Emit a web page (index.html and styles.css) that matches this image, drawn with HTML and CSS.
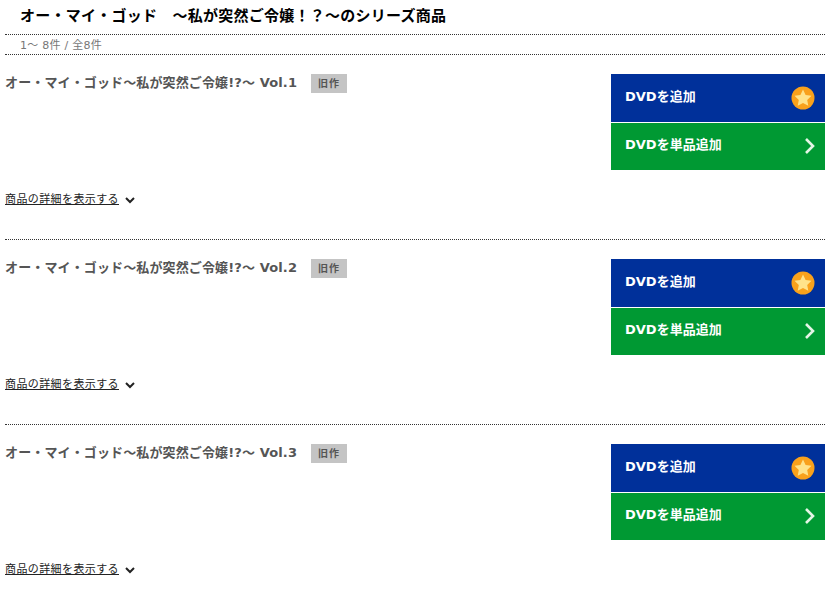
FILE: index.html
```html
<!DOCTYPE html>
<html lang="ja">
<head>
  <meta charset="UTF-8" />
  <title>オー・マイ・ゴッド ～私が突然ご令嬢！？～のシリーズ商品</title>
  <meta name="viewport" content="width=device-width, initial-scale=1.0" />
  <link rel="stylesheet" href="styles.css">
</head>
<body>
  <div class="container">
    <h1 class="series__title">オー・マイ・ゴッド　～私が突然ご令嬢！？～のシリーズ商品</h1>
    <div class="series__count">1～ 8件 / 全8件</div>

    <div class="item">
      <div class="item__main">
        <div class="item__head">
          <span class="item__title">オー・マイ・ゴッド～私が突然ご令嬢!?～ Vol.1</span>
          <span class="item__tag">旧作</span>
        </div>
        <a class="item__more" href="#"><span class="item__link">商品の詳細を表示する</span>
          <svg class="item__arrow" viewBox="0 0 10 7" width="10" height="7"><path d="M1 1l4 4 4-4" fill="none" stroke="#222" stroke-width="2"/></svg>
        </a>
      </div>
      <div class="item__btns">
        <a class="btn btn--blue" href="#"><span class="btn__label">DVDを追加</span>
          <svg class="btn__star" viewBox="0 0 24 24" width="24" height="24"><circle cx="12" cy="12" r="11.5" fill="#f9a11b"/><path d="M12 3.6l2.6 5.4 5.9.8-4.3 4.1 1.1 5.8-5.3-2.8-5.3 2.8 1.1-5.8-4.3-4.1 5.9-.8z" fill="#ffe38a"/></svg>
        </a>
        <a class="btn btn--green" href="#"><span class="btn__label">DVDを単品追加</span>
          <svg class="btn__chev" viewBox="0 0 12 18" width="12" height="18"><path d="M3 2l7 7-7 7" fill="none" stroke="#e4f5e6" stroke-width="2.6"/></svg>
        </a>
      </div>
    </div>

    <div class="item">
      <div class="item__main">
        <div class="item__head">
          <span class="item__title">オー・マイ・ゴッド～私が突然ご令嬢!?～ Vol.2</span>
          <span class="item__tag">旧作</span>
        </div>
        <a class="item__more" href="#"><span class="item__link">商品の詳細を表示する</span>
          <svg class="item__arrow" viewBox="0 0 10 7" width="10" height="7"><path d="M1 1l4 4 4-4" fill="none" stroke="#222" stroke-width="2"/></svg>
        </a>
      </div>
      <div class="item__btns">
        <a class="btn btn--blue" href="#"><span class="btn__label">DVDを追加</span>
          <svg class="btn__star" viewBox="0 0 24 24" width="24" height="24"><circle cx="12" cy="12" r="11.5" fill="#f9a11b"/><path d="M12 3.6l2.6 5.4 5.9.8-4.3 4.1 1.1 5.8-5.3-2.8-5.3 2.8 1.1-5.8-4.3-4.1 5.9-.8z" fill="#ffe38a"/></svg>
        </a>
        <a class="btn btn--green" href="#"><span class="btn__label">DVDを単品追加</span>
          <svg class="btn__chev" viewBox="0 0 12 18" width="12" height="18"><path d="M3 2l7 7-7 7" fill="none" stroke="#e4f5e6" stroke-width="2.6"/></svg>
        </a>
      </div>
    </div>

    <div class="item">
      <div class="item__main">
        <div class="item__head">
          <span class="item__title">オー・マイ・ゴッド～私が突然ご令嬢!?～ Vol.3</span>
          <span class="item__tag">旧作</span>
        </div>
        <a class="item__more" href="#"><span class="item__link">商品の詳細を表示する</span>
          <svg class="item__arrow" viewBox="0 0 10 7" width="10" height="7"><path d="M1 1l4 4 4-4" fill="none" stroke="#222" stroke-width="2"/></svg>
        </a>
      </div>
      <div class="item__btns">
        <a class="btn btn--blue" href="#"><span class="btn__label">DVDを追加</span>
          <svg class="btn__star" viewBox="0 0 24 24" width="24" height="24"><circle cx="12" cy="12" r="11.5" fill="#f9a11b"/><path d="M12 3.6l2.6 5.4 5.9.8-4.3 4.1 1.1 5.8-5.3-2.8-5.3 2.8 1.1-5.8-4.3-4.1 5.9-.8z" fill="#ffe38a"/></svg>
        </a>
        <a class="btn btn--green" href="#"><span class="btn__label">DVDを単品追加</span>
          <svg class="btn__chev" viewBox="0 0 12 18" width="12" height="18"><path d="M3 2l7 7-7 7" fill="none" stroke="#e4f5e6" stroke-width="2.6"/></svg>
        </a>
      </div>
    </div>
  </div>
</body>
</html>
```

FILE: styles.css
```css
html, body {
  height: 605px;
  overflow: hidden;
}
body {
  font-family: "DejaVu Sans", "Noto Sans CJK JP", sans-serif;
  background: #fff;
  color: #000;
  margin: 0;
  padding: 0;
}
.container {
  width: 820px;
  margin-left: 5px;
}
.series__title {
  margin: 0;
  height: 27px;
  padding: 7px 0 0 15px;
  font-size: 15px;
  line-height: 18px;
  font-weight: bold;
  letter-spacing: 0.25px;
  border-bottom: 1px dotted #333;
}
.series__count {
  height: 19px;
  padding-left: 15px;
  font-size: 11px;
  line-height: 21px;
  letter-spacing: 0.25px;
  color: #777;
  border-bottom: 1px dotted #333;
}
.item {
  display: flex;
  justify-content: space-between;
  height: 165px;
  padding-top: 19px;
  border-bottom: 1px dotted #333;
}
.item:last-child {
  border-bottom: 0;
}
.item__main {
  display: flex;
  flex-direction: column;
  justify-content: space-between;
  height: 134px;
}
.item__head {
  display: flex;
  align-items: flex-start;
  gap: 14px;
}
.item__title {
  font-size: 13px;
  line-height: 17px;
  font-weight: bold;
  letter-spacing: 0.13px;
  color: #555;
}
.item__tag {
  width: 36px;
  height: 19px;
  background: #c4c4c4;
  color: #555;
  font-size: 10px;
  font-weight: bold;
  line-height: 19px;
  letter-spacing: 1px;
  text-align: center;
}
.item__more {
  display: flex;
  align-items: center;
  gap: 6px;
  font-size: 11px;
  line-height: 14px;
  letter-spacing: 0.4px;
  padding-bottom: 1px;
  color: #222;
  text-decoration: none;
}
.item__link {
  text-decoration: underline;
}
.item__btns {
  width: 214px;
  display: flex;
  flex-direction: column;
  gap: 1px;
}
.btn {
  display: flex;
  align-items: center;
  justify-content: space-between;
  height: 47.5px;
  padding: 0 10px 0 14px;
  box-sizing: border-box;
  color: #fff;
  font-size: 13px;
  font-weight: bold;
  text-decoration: none;
}
.btn__label {
  padding-bottom: 5px;
}
.btn--blue {
  background: #00309a;
}
.btn--green {
  background: #009933;
}
```
